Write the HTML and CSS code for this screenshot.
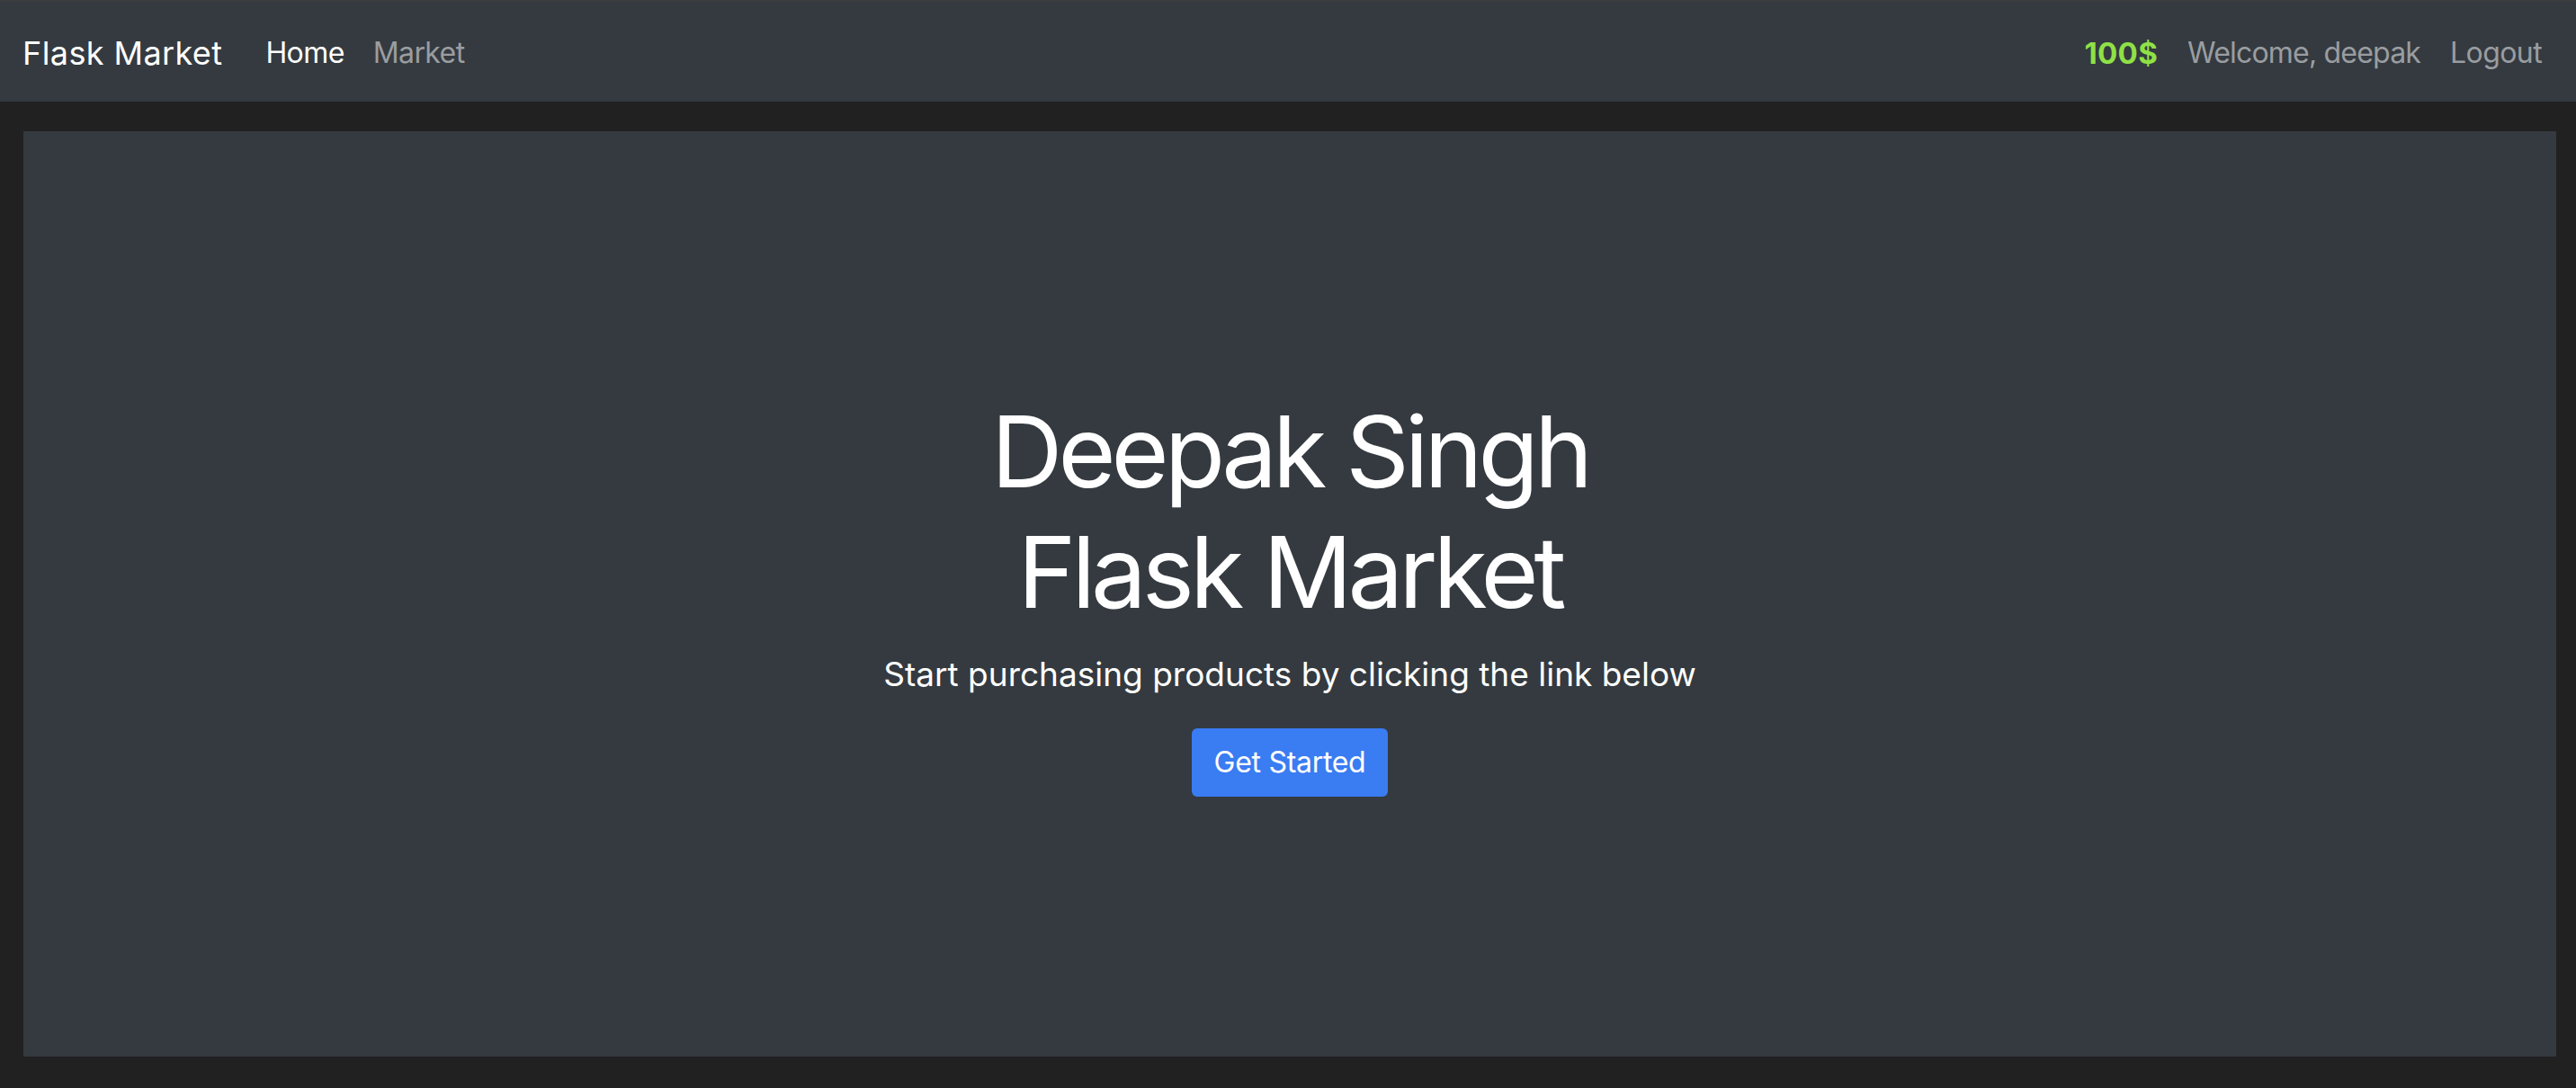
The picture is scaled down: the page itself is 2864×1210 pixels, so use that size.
FILE: index.html
```html
<!DOCTYPE html>
<html lang="en">
<head>
<meta charset="utf-8">
<title>Flask Market</title>
<link rel="stylesheet" href="styles.css">
</head>
<body>
<nav class="navbar">
  <a class="brand" href="#">Flask Market</a>
  <ul class="nav-left">
    <li><a class="nav-link active" href="#">Home</a></li>
    <li><a class="nav-link" href="#">Market</a></li>
  </ul>
  <ul class="nav-right">
    <li><span class="nav-link budget">100$</span></li>
    <li><a class="nav-link welcome" href="#">Welcome, deepak</a></li>
    <li><a class="nav-link" href="#">Logout</a></li>
  </ul>
</nav>
<main class="page">
  <section class="jumbotron">
    <h1 class="title">Deepak Singh<br>Flask Market</h1>
    <p class="lead">Start purchasing products by clicking the link below</p>
    <a class="btn" href="#">Get Started</a>
  </section>
</main>
</body>
</html>
```
FILE: styles.css
```css
html, body {
  margin: 0;
  padding: 0;
}
body {
  background: #212121;
  font-family: Inter, "Noto Sans", sans-serif;
  color: #fff;
  height: 1210px;
  overflow: hidden;
}
a { text-decoration: none; }
ul { list-style: none; margin: 0; padding: 0; }

.navbar {
  height: 113px;
  box-sizing: border-box;
  background: #343a40;
  border-top: 2px solid #3b3c3e;
  display: flex;
  align-items: center;
  padding: 2px 38px 0 25px;
}
.brand {
  color: #fff;
  font-size: 36px;
  margin-right: 48px;
  letter-spacing: 0.4px;
}
.nav-left, .nav-right {
  display: flex;
  align-items: center;
}
.nav-left { gap: 32px; }
.nav-right { margin-left: auto; gap: 33px; }
.nav-link {
  font-size: 32px;
  color: #9a9da0;
  letter-spacing: -0.6px;
}
.nav-link.active { color: #fff; }
.nav-link.welcome { letter-spacing: -0.8px; }
.budget {
  color: #8fe146;
  font-weight: 700;
  font-size: 33px;
  letter-spacing: 0.3px;
}

.page {
  padding: 33px 22px 35px 26px;
}
.jumbotron {
  height: 1029px;
  background: #343a40;
  display: flex;
  flex-direction: column;
  align-items: center;
  justify-content: center;
  text-align: center;
  padding: 4px 0;
  box-sizing: border-box;
}
.title {
  margin: 0 0 19px;
  font-size: 110px;
  font-weight: 400;
  line-height: 134px;
  letter-spacing: -5px;
}
.lead {
  margin: 0 0 32px;
  font-size: 37px;
  line-height: 1.5;
  letter-spacing: 0;
}
.btn {
  display: inline-block;
  background: #3a7cf2;
  color: #fff;
  font-size: 32px;
  line-height: 48px;
  padding: 14px 25px;
  border-radius: 6px;
  letter-spacing: -0.3px;
}
```
